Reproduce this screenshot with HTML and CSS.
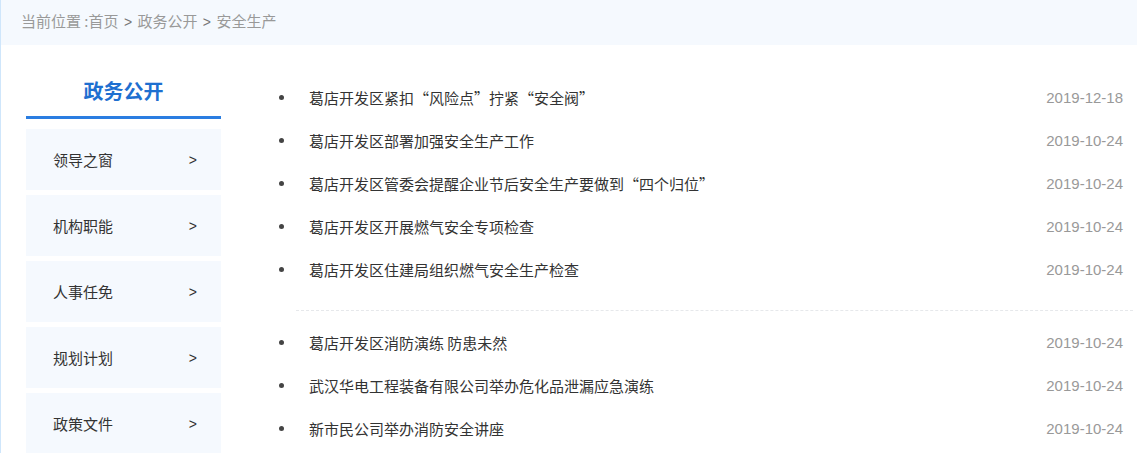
FILE: index.html
```html
<!DOCTYPE html>
<html>
    <head>
        <title>安全生产</title>
        <link rel="stylesheet" href="styles.css">
    </head>
    <body>
        <div class="page">
            <div class="crumbs">当前位置 :首页 <span class="gt">&gt;</span> 政务公开 <span class="gt">&gt;</span> 安全生产</div>
            <div class="main">
                <div class="side">
                    <div class="side-title">政务公开</div>
                    <a class="side-item" href="#"><span>领导之窗</span><span class="arrow">&gt;</span></a>
                    <a class="side-item" href="#"><span>机构职能</span><span class="arrow">&gt;</span></a>
                    <a class="side-item" href="#"><span>人事任免</span><span class="arrow">&gt;</span></a>
                    <a class="side-item" href="#"><span>规划计划</span><span class="arrow">&gt;</span></a>
                    <a class="side-item" href="#"><span>政策文件</span><span class="arrow">&gt;</span></a>
                </div>
                <div class="content">
                    <ul class="news">
                        <li><span class="title">葛店开发区紧扣“风险点”拧紧“安全阀”</span><span class="date">2019-12-18</span></li>
                        <li><span class="title">葛店开发区部署加强安全生产工作</span><span class="date">2019-10-24</span></li>
                        <li><span class="title">葛店开发区管委会提醒企业节后安全生产要做到“四个归位”</span><span class="date">2019-10-24</span></li>
                        <li><span class="title">葛店开发区开展燃气安全专项检查</span><span class="date">2019-10-24</span></li>
                        <li><span class="title">葛店开发区住建局组织燃气安全生产检查</span><span class="date">2019-10-24</span></li>
                    </ul>
                    <div class="sep"></div>
                    <ul class="news news-second">
                        <li><span class="title">葛店开发区消防演练 防患未然</span><span class="date">2019-10-24</span></li>
                        <li><span class="title">武汉华电工程装备有限公司举办危化品泄漏应急演练</span><span class="date">2019-10-24</span></li>
                        <li><span class="title">新市民公司举办消防安全讲座</span><span class="date">2019-10-24</span></li>
                    </ul>
                </div>
            </div>
        </div>
    </body>
</html>
```

FILE: styles.css
```css
html, body {
    margin: 0;
    padding: 0;
    background: #fff;
    font-family: "Noto Sans CJK SC", "Liberation Sans", sans-serif;
    font-size: 15px;
    color: #333;
}

.page {
    border-left: 1px solid #cfe6fb;
    min-height: 453px;
    box-sizing: border-box;
}

.crumbs {
    height: 45px;
    line-height: 42px;
    padding-left: 20px;
    background: #f5f9fe;
    color: #999;
}

.gt {
    font-family: "Liberation Sans", sans-serif;
    font-size: 14px;
    color: #777;
    margin: 0 2px;
}

.main {
    display: flex;
    padding-left: 25px;
}

/* left menu */
.side {
    width: 195px;
    flex-shrink: 0;
}

.side-title {
    margin-top: 21px;
    height: 50px;
    line-height: 50px;
    text-align: center;
    font-size: 20px;
    font-weight: bold;
    color: #1e6fd0;
    border-bottom: 3px solid #2a7de1;
    margin-bottom: 10px;
}

.side-item {
    display: flex;
    justify-content: space-between;
    align-items: center;
    height: 61px;
    margin-bottom: 5px;
    padding: 0 24px 0 27px;
    background: #f5f9fe;
    color: #333;
    text-decoration: none;
}

.arrow {
    font-family: "Liberation Sans", sans-serif;
    font-size: 14px;
}

/* news list */
.content {
    flex: 1;
    margin-left: 58px;
    margin-right: 4px;
    padding-top: 31px;
}

.news {
    list-style: none;
    margin: 0;
    padding: 0;
}

.news li {
    display: flex;
    align-items: center;
    height: 43px;
    padding-right: 10px;
}

.news li::before {
    content: "";
    width: 5px;
    height: 5px;
    border-radius: 50%;
    background: #444;
    margin-right: 25px;
    flex-shrink: 0;
}

.news .date {
    margin-left: auto;
    font-family: "Liberation Sans", sans-serif;
    color: #999;
}

.sep {
    margin: 19px 0 10px 17px;
    border-top: 1px dashed #e6e8eb;
}
```
